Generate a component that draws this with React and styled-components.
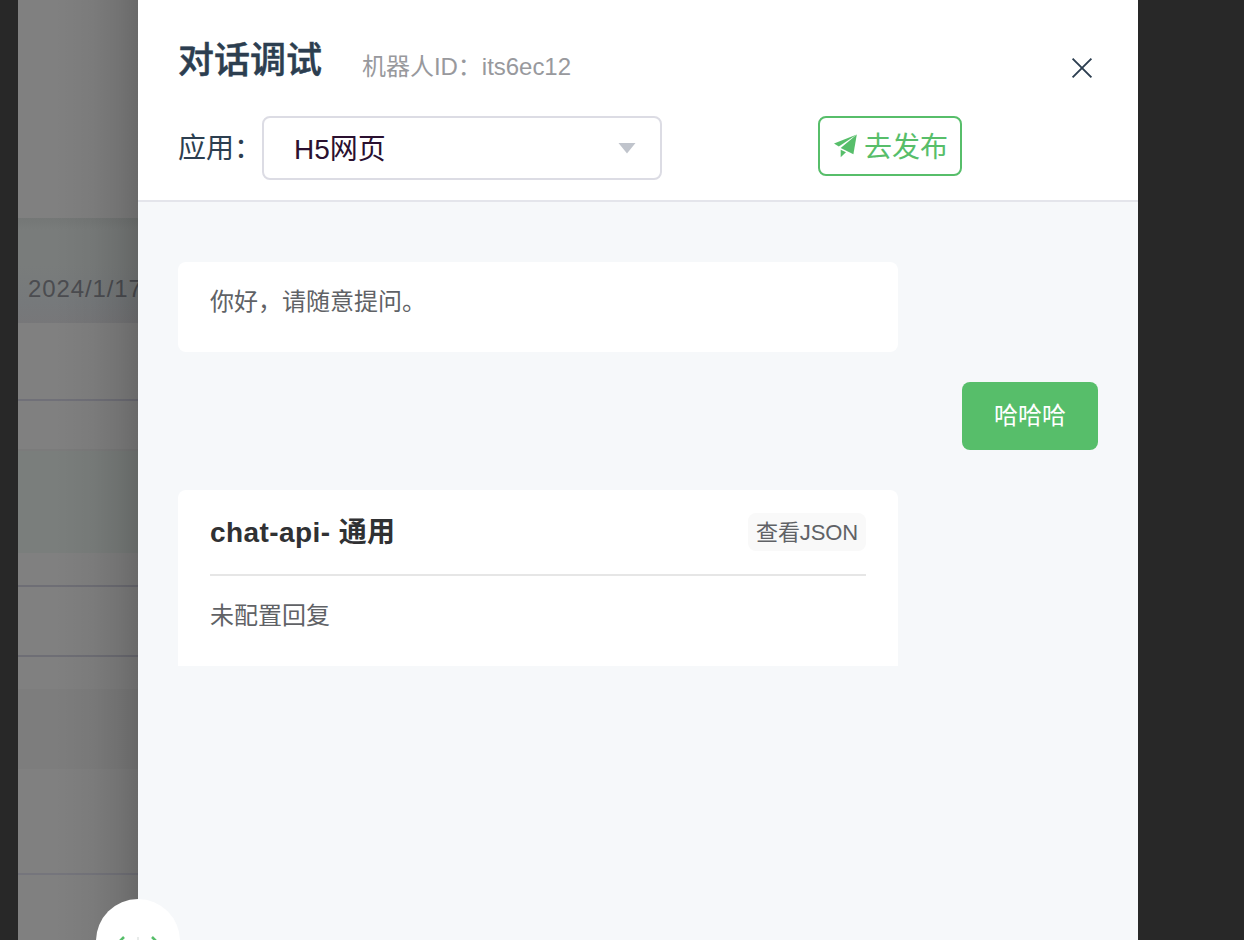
import React from "react";
import styled, {createGlobalStyle} from "styled-components";

const colors = {
    primary: "#57be6a",
    title: "#2c3e50",
    text: "#606266",
    muted: "#98999d",
    border: "#dcdce4",
    panel: "#f6f8fa",
    backdrop: "#282828",
};

const GlobalStyle = createGlobalStyle`
  * {
    box-sizing: border-box;
  }
  body {
    margin: 0;
    overflow: hidden;
    background: ${colors.backdrop};
    font-family: "Liberation Sans", "Noto Sans CJK SC", sans-serif;
  }
  h1, h2, p {
    margin: 0;
  }
`;

const Screen = styled.div`
  display: flex;
  position: relative;
  height: 940px;
  padding-left: 18px;
  overflow: hidden;
`;

/* page under the mask, only its left edge is visible */
const Page = styled.div`
  position: relative;
  width: 120px;
  flex: none;
  overflow: hidden;
  background: #808080;
  &::after {
    content: "";
    position: absolute;
    inset: 0;
    background: linear-gradient(90deg, rgba(0, 0, 0, 0) 30%, rgba(0, 0, 0, 0.04) 62%, rgba(0, 0, 0, 0.1) 83%, rgba(0, 0, 0, 0.18) 100%);
  }
`;
const Band = styled.div`
  height: ${p => p.$height}px;
  background: ${p => p.$bg || "transparent"};
  ${p => p.$line && `border-bottom: 2px solid ${p.$line};`}
`;
const DateCell = styled(Band)`
  display: flex;
  align-items: center;
  padding: 36px 0 0 10px;
  color: #4b4c50;
  font-size: 24px;
  letter-spacing: 0.9px;
  white-space: nowrap;
`;

const Drawer = styled.section`
  display: flex;
  flex-direction: column;
  width: 1000px;
  flex: none;
  background: ${colors.panel};
`;
const Header = styled.header`
  height: 202px;
  padding: 36px 40px 0;
  background: #fff;
  border-bottom: 2px solid #e4e5eb;
`;
const TitleRow = styled.div`
  display: flex;
  align-items: flex-start;
  height: 80px;
`;
const Title = styled.h1`
  margin-right: 40px;
  color: ${colors.title};
  font-size: 36px;
  font-weight: 500;
  line-height: 50px;
  -webkit-text-stroke: 0.5px ${colors.title};
`;
const RobotId = styled.span`
  margin-top: 13px;
  color: ${colors.muted};
  font-size: 24px;
  letter-spacing: -0.03px;
  line-height: 36px;
`;
const CloseButton = styled.button`
  display: flex;
  margin: 20px 4px 0 auto;
  padding: 0;
  border: 0;
  background: none;
`;
const ToolRow = styled.div`
  display: flex;
  align-items: flex-start;
`;
const Label = styled.label`
  width: 84px;
  color: ${colors.title};
  font-size: 28px;
  line-height: 66px;
  white-space: nowrap;
`;
const SelectBox = styled.div`
  display: flex;
  align-items: center;
  justify-content: space-between;
  width: 400px;
  height: 64px;
  padding: 0 24px 0 30px;
  border: 2px solid ${colors.border};
  border-radius: 8px;
  color: #2a1030;
  font-size: 28px;
  line-height: 40px;
  span {
    padding-top: 3px;
  }
`;
const PublishButton = styled.button`
  display: flex;
  align-items: center;
  gap: 6px;
  width: 144px;
  height: 60px;
  margin-left: 156px;
  padding: 0 0 0 14px;
  border: 2px solid ${colors.primary};
  border-radius: 8px;
  background: #fff;
  color: ${colors.primary};
  font-family: inherit;
  font-size: 28px;
  line-height: 40px;
  white-space: nowrap;
  span {
    padding-top: 3px;
  }
  svg {
    flex: none;
  }
`;

const Messages = styled.main`
  display: flex;
  flex-direction: column;
  align-items: flex-start;
  padding: 60px 40px 0;
`;
const Bubble = styled.div`
  width: 720px;
  height: 90px;
  padding: 22px 32px;
  border-radius: 8px;
  background: #fff;
  color: ${colors.text};
  font-size: 24px;
  line-height: 36px;
`;
const UserBubble = styled.div`
  align-self: flex-end;
  height: 68px;
  margin: 30px 0 40px;
  padding: 0 32px;
  border-radius: 8px;
  background: ${colors.primary};
  color: #fff;
  font-size: 24px;
  line-height: 68px;
`;
const ReplyCard = styled.article`
  width: 720px;
  height: 176px;
  padding: 0 32px;
  border-radius: 8px 8px 0 0;
  background: #fff;
`;
const ReplyHead = styled.div`
  display: flex;
  align-items: center;
  justify-content: space-between;
  height: 86px;
  border-bottom: 2px solid #e6e6e6;
`;
const ReplyTitle = styled.h2`
  padding-top: 2px;
  color: #303133;
  font-size: 28px;
  font-weight: 700;
  letter-spacing: 0.42px;
  line-height: 40px;
`;
const JsonTag = styled.span`
  width: 118px;
  height: 38px;
  padding: 0 8px;
  border-radius: 8px;
  background: #f9f9f9;
  color: ${colors.text};
  font-size: 22px;
  letter-spacing: -0.1px;
  line-height: 39px;
  white-space: nowrap;
`;
const ReplyText = styled.p`
  padding-top: 22px;
  color: ${colors.text};
  font-size: 24px;
  line-height: 36px;
`;

const FloatingBall = styled.div`
  position: absolute;
  left: 96px;
  top: 899px;
  width: 84px;
  height: 84px;
  border-radius: 50%;
  background: #fff;
`;

const CloseIcon = () => (
    <svg width="24" height="24" viewBox="0 0 24 24" fill="none" stroke={colors.title} strokeWidth="1.9">
        <path d="M2.6 2.6 21.4 21.4M21.4 2.6 2.6 21.4"/>
    </svg>
);

const PlaneIcon = () => (
    <svg width="24" height="24" viewBox="0 0 24 24" fill={colors.primary}>
        <path d="M0 9.6 22.8 0.6 4.8 12.4Z"/>
        <path d="M22.8 0.6 19.4 20.2 6.7 14Z"/>
        <path d="M6.7 15.7 12 18.3 6.7 23.2Z"/>
    </svg>
);

const ArrowIcon = () => (
    <svg width="18" height="12" viewBox="0 0 18 12" fill="#c0c4cc">
        <path d="M0.5 1h17L9 11.5Z"/>
    </svg>
);

const BallIcon = () => (
    <svg width="84" height="84" viewBox="0 0 84 84" fill="none" strokeWidth="2.6">
        <path d="M28 38 22 44M56 38l6 6" stroke={colors.primary}/>
        <path d="M42 38v8" stroke="#e8ebea" strokeWidth="2"/>
    </svg>
);

const App = () => {
    return (
        <Screen>
            <GlobalStyle/>
            <Page>
                <Band $height={218}/>
                <DateCell $height={105} $bg="linear-gradient(#747776, #797c7b 12%, #797c7b 45%, #76797b 80%, #777779)">2024/1/17</DateCell>
                <Band $height={78} $line="#707078"/>
                <Band $height={50} $line="#7b7b7b"/>
                <Band $height={102} $bg="#7a7e7c"/>
                <Band $height={34} $line="#6e6e75"/>
                <Band $height={70} $line="#6e6e75"/>
                <Band $height={32}/>
                <Band $height={80} $bg="#7d7d7d"/>
                <Band $height={106} $line="#75757c"/>
            </Page>
            <Drawer>
                <Header>
                    <TitleRow>
                        <Title>对话调试</Title>
                        <RobotId>机器人ID：its6ec12</RobotId>
                        <CloseButton aria-label="close"><CloseIcon/></CloseButton>
                    </TitleRow>
                    <ToolRow>
                        <Label>应用：</Label>
                        <SelectBox>
                            <span>H5网页</span>
                            <ArrowIcon/>
                        </SelectBox>
                        <PublishButton>
                            <PlaneIcon/>
                            <span>去发布</span>
                        </PublishButton>
                    </ToolRow>
                </Header>
                <Messages>
                    <Bubble>你好，请随意提问。</Bubble>
                    <UserBubble>哈哈哈</UserBubble>
                    <ReplyCard>
                        <ReplyHead>
                            <ReplyTitle>chat-api- 通用</ReplyTitle>
                            <JsonTag>查看JSON</JsonTag>
                        </ReplyHead>
                        <ReplyText>未配置回复</ReplyText>
                    </ReplyCard>
                </Messages>
            </Drawer>
            <FloatingBall><BallIcon/></FloatingBall>
        </Screen>
    );
};

export default App;
